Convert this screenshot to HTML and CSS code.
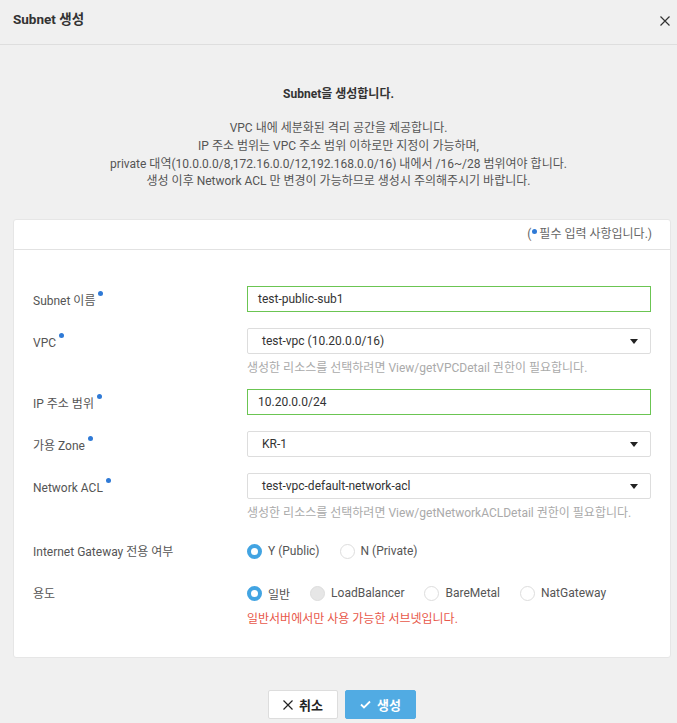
FILE: index.html
```html
<!DOCTYPE html>
<html lang="ko">
<head>
<meta charset="utf-8">
<title>Subnet 생성</title>
<link rel="stylesheet" href="styles.css">
</head>
<body>
<div class="modal">
  <div class="modal-header">
    <span class="modal-title">Subnet 생성</span>
    <span class="close" aria-label="닫기"><svg width="10" height="10" viewBox="0 0 10 10"><path d="M0.5 0.5L9.5 9.5M9.5 0.5L0.5 9.5" stroke="#333" stroke-width="1.2" fill="none"/></svg></span>
  </div>
  <div class="intro">
    <p class="intro-title">Subnet을 생성합니다.</p>
    <p class="intro-body">VPC 내에 세분화된 격리 공간을 제공합니다.<br>IP 주소 범위는 VPC 주소 범위 이하로만 지정이 가능하며,<br>private 대역(10.0.0.0/8,172.16.0.0/12,192.168.0.0/16) 내에서 /16~/28 범위여야 합니다.<br>생성 이후 Network ACL 만 변경이 가능하므로 생성시 주의해주시기 바랍니다.</p>
  </div>
  <div class="card">
    <div class="card-header">(<span class="req"></span>필수 입력 사항입니다.)</div>
    <div class="card-body">
      <div class="row">
        <div class="label">Subnet 이름<span class="req"></span></div>
        <div class="field"><div class="input valid">test-public-sub1</div></div>
      </div>
      <div class="row">
        <div class="label">VPC<span class="req"></span></div>
        <div class="field">
          <div class="select">test-vpc (10.20.0.0/16)<span class="arrow"></span></div>
          <div class="help">생성한 리소스를 선택하려면 View/getVPCDetail 권한이 필요합니다.</div>
        </div>
      </div>
      <div class="row">
        <div class="label">IP 주소 범위<span class="req"></span></div>
        <div class="field"><div class="input valid">10.20.0.0/24</div></div>
      </div>
      <div class="row">
        <div class="label">가용 Zone<span class="req"></span></div>
        <div class="field"><div class="select">KR-1<span class="arrow"></span></div></div>
      </div>
      <div class="row">
        <div class="label">Network ACL<span class="req"></span></div>
        <div class="field">
          <div class="select">test-vpc-default-network-acl<span class="arrow"></span></div>
          <div class="help">생성한 리소스를 선택하려면 View/getNetworkACLDetail 권한이 필요합니다.</div>
        </div>
      </div>
      <div class="row gateway-row">
        <div class="label">Internet Gateway 전용 여부</div>
        <div class="field">
          <div class="radios">
            <span class="opt"><span class="radio on"></span>Y (Public)</span>
            <span class="opt"><span class="radio"></span>N (Private)</span>
          </div>
        </div>
      </div>
      <div class="row">
        <div class="label">용도</div>
        <div class="field">
          <div class="radios">
            <span class="opt"><span class="radio on"></span>일반</span>
            <span class="opt"><span class="radio disabled"></span>LoadBalancer</span>
            <span class="opt"><span class="radio"></span>BareMetal</span>
            <span class="opt"><span class="radio"></span>NatGateway</span>
          </div>
          <div class="error">일반서버에서만 사용 가능한 서브넷입니다.</div>
        </div>
      </div>
    </div>
  </div>
  <div class="actions">
    <button class="btn btn-cancel"><svg width="10" height="10" viewBox="0 0 10 10"><path d="M0.5 0.5L9.5 9.5M9.5 0.5L0.5 9.5" stroke="#222" stroke-width="1.2" fill="none"/></svg>취소</button>
    <button class="btn btn-primary"><svg width="11" height="9" viewBox="0 0 11 9"><path d="M1 4.5L4 7.5L10 1.5" stroke="#fff" stroke-width="1.8" fill="none"/></svg>생성</button>
  </div>
</div>
</body>
</html>
```
FILE: styles.css
```css
* { box-sizing: border-box; }
html, body { margin: 0; padding: 0; }
body {
  background: #f0f0f0;
  font-family: Roboto, "Noto Sans CJK KR", sans-serif;
  font-size: 12px;
  color: #555;
}
.modal { width: 677px; height: 723px; overflow: hidden; }
.modal-header {
  height: 45px;
  border-bottom: 1px solid #dedede;
  display: flex;
  justify-content: space-between;
  align-items: flex-start;
  padding: 10px 6px 0 13px;
}
.modal-title { font-size: 13.5px; font-weight: bold; color: #333; line-height: 18px; }
.close { display: flex; padding-top: 6px; padding-right: 1px; }
.intro { text-align: center; padding-top: 40px; }
.intro p { margin: 0; }
.intro-title { font-weight: bold; color: #333; line-height: 18px; }
.intro-body { margin-top: 17px !important; line-height: 17.8px; color: #555; }
.card {
  margin: 28px 6px 0 13px;
  background: #fff;
  border: 1px solid #e6e6e6;
  border-radius: 3px;
}
.card-header {
  height: 30px;
  border-bottom: 1px solid #e2e2e2;
  text-align: right;
  padding: 6px 18px 0 0;
  color: #666;
  line-height: 16px;
}
.req {
  display: inline-block;
  width: 5px;
  height: 5px;
  border-radius: 50%;
  background: #2f7ad6;
  vertical-align: top;
  margin: 1px 1px 0 3px;
}
.card-header .req { margin: 3px 2px 0 1px; }
.card-body { padding: 36px 19px 30px 19px; }
.row { display: flex; margin-bottom: 16px; }
.row:last-child { margin-bottom: 0; }
.gateway-row { padding-top: 3px; }
.label { width: 214px; flex: none; height: 26px; line-height: 22px; padding-top: 4px; color: #555; }
.field { flex: 1; }
.input, .select {
  height: 26px;
  border: 1px solid #ddd;
  line-height: 24px;
  color: #333;
  font-size: 12px;
  position: relative;
}
.input { padding-left: 10px; }
.input.valid { border-color: #6bc552; }
.select { padding-left: 14px; border-radius: 2px; }
.arrow {
  position: absolute;
  right: 12px;
  top: 10px;
  width: 0; height: 0;
  border-left: 4px solid transparent;
  border-right: 4px solid transparent;
  border-top: 5px solid #222;
}
.help { color: #aaa; line-height: 16px; margin-top: 6px; margin-bottom: -3px; }
.radios { display: flex; height: 26px; align-items: center; padding-top: 1px; }
.opt { display: inline-flex; align-items: center; margin-right: 20px; color: #555; padding-top: 1px; }
.radio {
  width: 15px; height: 15px;
  border-radius: 50%;
  border: 1px solid #ddd;
  background: #fff;
  margin-right: 6px;
  flex: none;
}
.radio.on { border: 4px solid #42a4e2; background: #fff; }
.radio.disabled { background: #e6e6e6; border-color: #ddd; }
.error { color: #e8584a; line-height: 16px; margin-top: 6px; }
.actions {
  display: flex;
  justify-content: center;
  gap: 7px;
  padding-left: 7px;
  margin-top: 32px;
}
.btn {
  height: 29px;
  display: inline-flex;
  align-items: center;
  justify-content: center;
  gap: 6px;
  font-family: Roboto, "Noto Sans CJK KR", sans-serif;
  font-size: 13px;
  font-weight: bold;
  border-radius: 2px;
  padding: 0;
}
.btn-cancel { width: 70px; background: #fff; border: 1px solid #ddd; color: #222; }
.btn-primary { width: 71px; background: #51abe3; border: 1px solid #51abe3; color: #fff; }
```
